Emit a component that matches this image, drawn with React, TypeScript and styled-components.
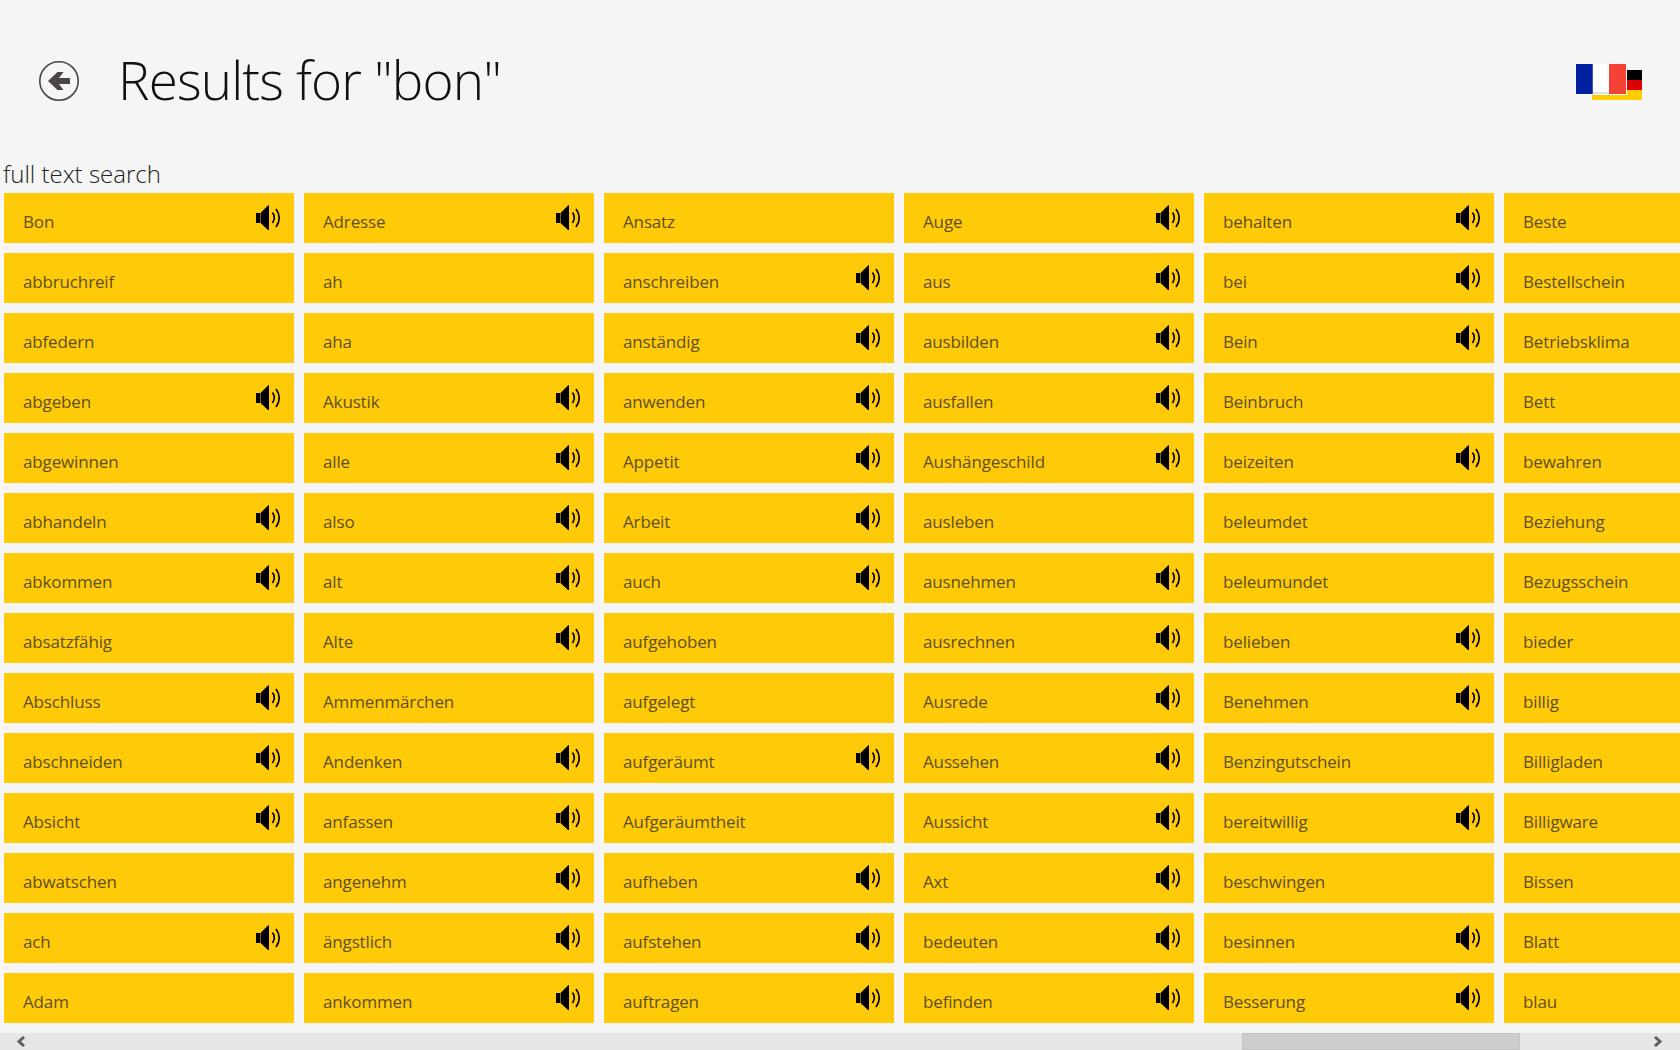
import React from 'react';
import styled, { createGlobalStyle } from 'styled-components';

const GlobalStyle = createGlobalStyle`
  html, body {
    margin: 0;
    padding: 0;
    height: 100%;
    overflow: hidden;
    background: #f5f5f5;
    font-family: "Open Sans", "Noto Sans", sans-serif;
  }
`;

const Page = styled.div`
  width: 1680px;
  height: 1050px;
  display: flex;
  flex-direction: column;
  overflow: hidden;
`;

const Header = styled.header`
  height: 156px;
  flex: none;
  display: flex;
  align-items: center;
  padding: 6px 38px 0 39px;
  box-sizing: border-box;
`;

const BackButton = styled.button`
  width: 40px;
  height: 40px;
  padding: 0;
  border: 0;
  background: none;
  flex: none;
  display: block;
`;

const Title = styled.h1`
  margin: -2px 0 0 39px;
  flex: 1;
  font-size: 53px;
  line-height: 70px;
  letter-spacing: -0.85px;
  font-weight: 300;
  color: #111;
`;

const LangFlags = styled.svg`
  width: 66px;
  height: 36px;
  margin-top: 2px;
  flex: none;
`;

const SectionLabel = styled.div`
  height: 37px;
  flex: none;
  padding-left: 3px;
  font-size: 24px;
  line-height: 35px;
  font-weight: 300;
  color: #222;
`;

const Results = styled.div`
  flex: none;
  display: grid;
  grid-auto-flow: column;
  grid-template-rows: repeat(14, 50px);
  grid-auto-columns: 290px;
  gap: 10px;
  padding-left: 4px;
  height: 830px;
`;

const Tile = styled.div`
  background: #ffcb08;
  display: flex;
  align-items: center;
  justify-content: space-between;
  padding: 0 12px 0 19px;
  box-sizing: border-box;
`;

const Word = styled.span`
  font-size: 17px;
  line-height: 24px;
  letter-spacing: -0.15px;
  margin-top: 8px;
  color: #5f4f20;
`;

const SpeakerIcon = styled.svg`
  width: 26px;
  height: 25px;
  margin-top: -1px;
  flex: none;
`;

const ScrollBar = styled.div`
  margin-top: 10px;
  height: 17px;
  flex: none;
  background: #e6e6e6;
  display: flex;
  align-items: center;
  justify-content: space-between;
  position: relative;
  padding: 0 17px 0 16px;
`;

const ScrollThumb = styled.div`
  position: absolute;
  left: 1242px;
  width: 278px;
  top: 0;
  bottom: 0;
  background: #cdcdcd;
  border: 1px solid #c4c4c4;
  box-sizing: border-box;
`;

const Speaker = () => (
  <SpeakerIcon viewBox="0 0 26 25">
    <rect x="0" y="8" width="4" height="10" fill="#000" />
    <polygon points="4.5,8 12,0.5 13,0 13,25 12,25 4.5,18" fill="#000" />
    <path d="M16.5 7.5 Q20 12.5 16.5 18" fill="none" stroke="#000" strokeWidth="1.6" />
    <path d="M20 4 Q26.5 13 20 22" fill="none" stroke="#000" strokeWidth="1.6" />
  </SpeakerIcon>
);

const Arrow = ({ dir }: { dir: 'left' | 'right' }) => (
  <svg width="10" height="11" viewBox="0 0 10 11">
    <path
      d={dir === 'left' ? 'M8 1 L3 5.5 L8 10' : 'M2 1 L7 5.5 L2 10'}
      fill="none"
      stroke="#5f5f5f"
      strokeWidth="3"
    />
  </svg>
);

// word + whether it has a speaker icon, column by column
const words: [string, boolean][] = [
  ['Bon', true], ['abbruchreif', false], ['abfedern', false], ['abgeben', true], ['abgewinnen', false],
  ['abhandeln', true], ['abkommen', true], ['absatzfähig', false], ['Abschluss', true], ['abschneiden', true],
  ['Absicht', true], ['abwatschen', false], ['ach', true], ['Adam', false],

  ['Adresse', true], ['ah', false], ['aha', false], ['Akustik', true], ['alle', true],
  ['also', true], ['alt', true], ['Alte', true], ['Ammenmärchen', false], ['Andenken', true],
  ['anfassen', true], ['angenehm', true], ['ängstlich', true], ['ankommen', true],

  ['Ansatz', false], ['anschreiben', true], ['anständig', true], ['anwenden', true], ['Appetit', true],
  ['Arbeit', true], ['auch', true], ['aufgehoben', false], ['aufgelegt', false], ['aufgeräumt', true],
  ['Aufgeräumtheit', false], ['aufheben', true], ['aufstehen', true], ['auftragen', true],

  ['Auge', true], ['aus', true], ['ausbilden', true], ['ausfallen', true], ['Aushängeschild', true],
  ['ausleben', false], ['ausnehmen', true], ['ausrechnen', true], ['Ausrede', true], ['Aussehen', true],
  ['Aussicht', true], ['Axt', true], ['bedeuten', true], ['befinden', true],

  ['behalten', true], ['bei', true], ['Bein', true], ['Beinbruch', false], ['beizeiten', true],
  ['beleumdet', false], ['beleumundet', false], ['belieben', true], ['Benehmen', true], ['Benzingutschein', false],
  ['bereitwillig', true], ['beschwingen', false], ['besinnen', true], ['Besserung', true],

  ['Beste', false], ['Bestellschein', false], ['Betriebsklima', false], ['Bett', false], ['bewahren', false],
  ['Beziehung', false], ['Bezugsschein', false], ['bieder', false], ['billig', false], ['Billigladen', false],
  ['Billigware', false], ['Bissen', false], ['Blatt', false], ['blau', false],
];

export default function App() {
  return (
    <Page>
      <GlobalStyle />
      <Header>
        <BackButton aria-label="back">
          <svg width="40" height="40" viewBox="0 0 40 40">
            <circle cx="20" cy="20" r="19.2" fill="none" stroke="#4b4545" strokeWidth="1.6" />
            <path d="M31 17 H20 L24.5 11 H18.5 L9 20 L18.5 29 H24.5 L20 23 H31 Z" fill="#4b4545" />
          </svg>
        </BackButton>
        <Title>Results for "bon"</Title>
        <LangFlags viewBox="0 0 66 36">
          <rect x="16" y="6" width="50" height="10" fill="#000" />
          <rect x="16" y="16" width="50" height="10" fill="#dd0000" />
          <rect x="16" y="26" width="50" height="10" fill="#ffcc00" />
          <rect x="0" y="0" width="51" height="31" fill="#fff" />
          <rect x="0" y="0" width="16" height="30" fill="#00209f" />
          <rect x="16" y="0" width="1" height="30" fill="#3f55b5" />
          <rect x="17" y="28" width="16" height="2" fill="#e0e0e0" />
          <rect x="33" y="0" width="17" height="30" fill="#f44336" />
        </LangFlags>
      </Header>
      <SectionLabel>full text search</SectionLabel>
      <Results>
        {words.map(([word, audio], i) => (
          <Tile key={i}>
            <Word>{word}</Word>
            {audio && <Speaker />}
          </Tile>
        ))}
      </Results>
      <ScrollBar>
        <Arrow dir="left" />
        <ScrollThumb />
        <Arrow dir="right" />
      </ScrollBar>
    </Page>
  );
}
